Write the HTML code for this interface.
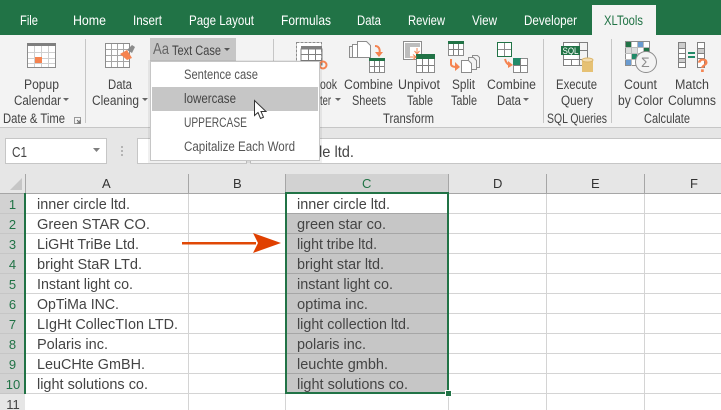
<!DOCTYPE html>
<html><head><meta charset="utf-8"><style>
html,body{margin:0;padding:0;background:#fff}
body{width:721px;height:410px;overflow:hidden}
svg{display:block}
text{font-family:"Liberation Sans",sans-serif;font-size:13.5px;fill:#444}
.t text{fill:#fff;font-size:14px}
.c text{font-size:14.67px;fill:#444}
.m text{fill:#555;font-size:13.5px}
.l{stroke:#d4d4d4;stroke-width:1;shape-rendering:crispEdges}
.g{stroke:#a6a6a6;stroke-width:1;shape-rendering:crispEdges}
.s{stroke:#c6c6c6;stroke-width:1;shape-rendering:crispEdges}
.r text{font-size:13px;fill:#217346;text-anchor:middle}
.i{fill:none;stroke:#7f7f7f;stroke-width:1;shape-rendering:crispEdges}
</style></head><body>
<svg width="721" height="410" viewBox="0 0 721 410" xmlns="http://www.w3.org/2000/svg">
<rect width="721" height="410" fill="#fff"/>
<!-- title tabs -->
<rect width="721" height="35" fill="#217346"/>
<rect x="592" y="5" width="64" height="30" fill="#f3f3f3"/>
<g class="t">
<text x="20" y="25" textLength="18" lengthAdjust="spacingAndGlyphs">File</text>
<text x="73" y="25" textLength="33" lengthAdjust="spacingAndGlyphs">Home</text>
<text x="133" y="25" textLength="29" lengthAdjust="spacingAndGlyphs">Insert</text>
<text x="189" y="25" textLength="65" lengthAdjust="spacingAndGlyphs">Page Layout</text>
<text x="281" y="25" textLength="50" lengthAdjust="spacingAndGlyphs">Formulas</text>
<text x="357" y="25" textLength="24" lengthAdjust="spacingAndGlyphs">Data</text>
<text x="408" y="25" textLength="37" lengthAdjust="spacingAndGlyphs">Review</text>
<text x="472" y="25" textLength="25" lengthAdjust="spacingAndGlyphs">View</text>
<text x="524" y="25" textLength="53" lengthAdjust="spacingAndGlyphs">Developer</text>
<text x="604" y="25" textLength="39" lengthAdjust="spacingAndGlyphs" style="fill:#217346">XLTools</text>
</g>
<!-- ribbon -->
<rect y="35" width="721" height="92" fill="#f3f3f3"/>
<rect y="127" width="721" height="47" fill="#e6e6e6"/>
<line x1="0" x2="721" y1="127.5" y2="127.5" class="s"/>
<g class="s"><line x1="85.5" x2="85.5" y1="39" y2="123"/><line x1="273.5" x2="273.5" y1="39" y2="123"/><line x1="543.5" x2="543.5" y1="39" y2="123"/><line x1="611.5" x2="611.5" y1="39" y2="123"/></g>
<text x="24" y="89" textLength="35" lengthAdjust="spacingAndGlyphs">Popup</text>
<text x="14" y="105" textLength="47" lengthAdjust="spacingAndGlyphs">Calendar</text>
<text x="108" y="89" textLength="24" lengthAdjust="spacingAndGlyphs">Data</text>
<text x="92" y="105" textLength="47" lengthAdjust="spacingAndGlyphs">Cleaning</text>
<text x="3" y="123" textLength="62" lengthAdjust="spacingAndGlyphs">Date &amp; Time</text>
<text x="320" y="89" textLength="17" lengthAdjust="spacingAndGlyphs">ook</text>
<text x="320" y="105" textLength="11" lengthAdjust="spacingAndGlyphs">ter</text>
<text x="344" y="89" textLength="49" lengthAdjust="spacingAndGlyphs">Combine</text>
<text x="352" y="105" textLength="34" lengthAdjust="spacingAndGlyphs">Sheets</text>
<text x="398" y="89" textLength="42" lengthAdjust="spacingAndGlyphs">Unpivot</text>
<text x="407" y="105" textLength="26" lengthAdjust="spacingAndGlyphs">Table</text>
<text x="452" y="89" textLength="23" lengthAdjust="spacingAndGlyphs">Split</text>
<text x="451" y="105" textLength="26" lengthAdjust="spacingAndGlyphs">Table</text>
<text x="487" y="89" textLength="49" lengthAdjust="spacingAndGlyphs">Combine</text>
<text x="497" y="105" textLength="24" lengthAdjust="spacingAndGlyphs">Data</text>
<text x="383" y="123" textLength="51" lengthAdjust="spacingAndGlyphs">Transform</text>
<text x="556" y="89" textLength="41" lengthAdjust="spacingAndGlyphs">Execute</text>
<text x="561" y="105" textLength="32" lengthAdjust="spacingAndGlyphs">Query</text>
<text x="547" y="123" textLength="60" lengthAdjust="spacingAndGlyphs">SQL Queries</text>
<text x="624" y="89" textLength="33" lengthAdjust="spacingAndGlyphs">Count</text>
<text x="618" y="105" textLength="45" lengthAdjust="spacingAndGlyphs">by Color</text>
<text x="675" y="89" textLength="34" lengthAdjust="spacingAndGlyphs">Match</text>
<text x="668" y="105" textLength="48" lengthAdjust="spacingAndGlyphs">Columns</text>
<text x="644" y="123" textLength="46" lengthAdjust="spacingAndGlyphs">Calculate</text>
<g fill="#666"><path d="M63 98h6l-3 3zM142 98h6l-3 3zM335 98h6l-3 3zM523 98h6l-3 3z"/></g>
<path d="M74.500 117.500h6v6h-6z" fill="none" stroke="#999"/><path d="M77 120l3 3M80 120v3h-3" fill="none" stroke="#666"/>

<!-- popup calendar icon -->
<rect x="27.500" y="43.500" width="28" height="24" fill="#fff" stroke="#8c8c8c"/>
<rect x="27" y="43" width="29" height="3" fill="#7f7f7f"/>
<path d="M28 52.500h27M28 58.500h27M28 63.500h27M34.500 46v21M41.500 46v21M48.500 46v21" style="stroke:#cfcfcf;fill:none;shape-rendering:crispEdges"/>
<rect x="35" y="57" width="7" height="6" fill="#f58350"/>
<!-- data cleaning icon -->
<rect x="105.500" y="43.500" width="24" height="24" fill="#fff" stroke="#8c8c8c"/>
<path d="M106 49.500h23M106 55.500h23M106 61.500h23M111.500 44v23M117.500 44v23M123.500 44v23" style="stroke:#a6a6a6;fill:none;shape-rendering:crispEdges"/>
<path d="M120 54l7-4 5 8-5 2z" fill="#f58350"/>
<path d="M127 50l5-5 3 2-3 6z" fill="#8c8c8c"/>

<!-- workbook icon -->
<rect x="296.500" y="42.500" width="25" height="22" fill="#fff" stroke="#8c8c8c" stroke-dasharray="3 1"/>
<rect x="301" y="46" width="21" height="3" fill="#7f7f7f"/>
<path d="M301 49h21v16h-21zM301 54.500h21M301 60.500h21M308.500 49v16M315.500 49v16" class="i"/>
<circle cx="323" cy="65" r="3.500" fill="none" stroke="#f58350" stroke-width="2"/>

<!-- combine sheets -->
<path d="M354.500 46.500h-5v11h5z" fill="none" stroke="#8c8c8c"/><path d="M357.500 44.500h-5v13h5z" fill="#fff" stroke="#8c8c8c"/>
<path d="M357.500 41.500h9l4 4v12h-13z" fill="#fff" stroke="#8c8c8c"/>
<path d="M375 46c5 0 6 6 3 9" fill="none" stroke="#f58350" stroke-width="2"/><path d="M375 52l4 5 4-5z" fill="#f58350"/>
<rect x="369.500" y="58.500" width="15" height="14" fill="#fff" stroke="#8c8c8c"/><rect x="369" y="58" width="16" height="3" fill="#217346"/>
<path d="M370 66.500h14M374.500 61v11M379.500 61v11" class="i"/>

<!-- unpivot -->
<rect x="403.500" y="41.500" width="18" height="18" fill="#fff" stroke="#8c8c8c"/><rect x="405" y="43" width="15" height="4" fill="#bdbdbd"/><rect x="405" y="47" width="5" height="11" fill="#bdbdbd"/>
<path d="M417 48v5M414.500 51l2.500 3 2.500-3" stroke="#f58350" fill="none"/>
<rect x="416.500" y="54.500" width="18" height="18" fill="#fff" stroke="#8c8c8c"/><rect x="416" y="54" width="19" height="5" fill="#217346"/>
<path d="M417 65.500h17M422.500 59v13M428.500 59v13" class="i"/>
<path d="M410 57h6M413 54.500l3 2.500-3 2.500" stroke="#f58350" fill="none"/>

<!-- split -->
<rect x="448.500" y="41.500" width="15" height="14" fill="#fff" stroke="#8c8c8c"/><rect x="448" y="41" width="16" height="3" fill="#217346"/>
<path d="M449 49.500h14M453.500 44v11M458.500 44v11" class="i"/>
<path d="M451 59v5c0 2 2 3 6 3" fill="none" stroke="#f58350" stroke-width="2"/><path d="M455 62l5 5-5 4z" fill="#f58350"/>
<path d="M472.500 55.500h5l2 2v10h-7z" fill="#f3f3f3" stroke="#8c8c8c"/><path d="M468.500 57.500h5l3 3v9h-8z" fill="#f3f3f3" stroke="#8c8c8c"/><path d="M461.500 60.500h7l3 3v9h-10z" fill="#fff" stroke="#8c8c8c"/>

<!-- combine data -->
<rect x="497.500" y="42.500" width="14" height="14" fill="#fff" stroke="#217346"/><path d="M498 49.500h13M504.500 43v13" stroke="#8c8c8c" fill="none" shape-rendering="crispEdges"/>
<path d="M505 59c1 4 3 6 6 6" fill="none" stroke="#f58350" stroke-width="2"/><path d="M508 61l5 4-5 3z" fill="#f58350"/>
<rect x="513.500" y="58.500" width="14" height="14" fill="#fff" stroke="#8c8c8c"/><rect x="513" y="58" width="8" height="7" fill="#218a68"/><path d="M514 65.500h13M520.500 59v13" class="i"/>

<!-- SQL -->
<rect x="563.500" y="42.500" width="14" height="24" fill="#fff"/>
<path d="M563.500 42.500h24v23h-24zM563.500 59.500h24M571.500 59v7M579.500 42v24M579.500 50.500h8" class="i"/>
<rect x="561" y="46" width="19" height="9" fill="#217346"/>
<text x="562.500" y="54" textLength="16" lengthAdjust="spacingAndGlyphs" style="font-size:9.500px;fill:#fff">SQL</text>
<rect x="582" y="60" width="11" height="12" fill="#e6c174"/>
<ellipse cx="587.500" cy="60" rx="5.500" ry="2" fill="#f3dcae" stroke="#dcb568"/>

<!-- count by color -->
<rect x="625.500" y="41.500" width="24" height="24" fill="#fff" stroke="#8c8c8c"/>
<rect x="626" y="42" width="5" height="5" fill="#217346"/><rect x="637" y="42" width="6" height="5" fill="#6a9bd0"/>
<rect x="626" y="48" width="5" height="5" fill="#ddd"/><rect x="632" y="48" width="5" height="5" fill="#ddd"/><rect x="644" y="48" width="5" height="4" fill="#217346"/>
<rect x="632" y="54" width="5" height="5" fill="#218a68"/><rect x="626" y="60" width="5" height="5" fill="#6a9bd0"/>
<path d="M625 47.500h24M625 53.500h24M625 59.500h24M631.500 42v24M637.500 42v24M643.500 42v24" style="stroke:#bbb;fill:none;shape-rendering:crispEdges"/>
<circle cx="646" cy="62" r="10.500" fill="#f3f3f3" stroke="#8c8c8c"/>
<text x="641" y="67" style="font-size:14px;fill:#8c8c8c">Σ</text>

<!-- match -->
<rect x="678.500" y="42.500" width="7" height="25" fill="#fff" stroke="#7f7f7f"/>
<rect x="679" y="43" width="6" height="5" fill="#ccc"/><rect x="679" y="58" width="6" height="5" fill="#ccc"/>
<path d="M679 48.500h6M679 53.500h6M679 58.500h6M679 62.500h6" class="i"/>
<rect x="697.500" y="42.500" width="7" height="25" fill="#fff" stroke="#7f7f7f"/>
<rect x="698" y="48" width="6" height="5" fill="#ccc"/>
<path d="M698 48.500h6M698 53.500h6M698 58.500h6" class="i"/>
<rect x="688" y="52" width="7" height="2" fill="#218a68"/><rect x="688" y="56" width="7" height="2" fill="#218a68"/>
<text x="697" y="72" style="font-size:19px;font-weight:bold;fill:#f58350">?</text>

<!-- formula bar -->
<rect x="5.500" y="138.500" width="101" height="25" fill="#fff" stroke="#c6c6c6"/>
<text x="12" y="157" style="font-size:15px" textLength="15" lengthAdjust="spacingAndGlyphs">C1</text>
<path d="M93 148h7l-3.500 4z" fill="#7f7f7f"/>
<g fill="#b4b4b4"><rect x="121" y="146" width="2" height="2"/><rect x="121" y="150" width="2" height="2"/><rect x="121" y="154" width="2" height="2"/></g>
<rect x="137.500" y="138.500" width="109" height="25" fill="#fff" stroke="#c6c6c6"/>
<rect x="250.500" y="138.500" width="472" height="25" fill="#fff" stroke="#c6c6c6"/>
<text x="319" y="157" style="font-size:16px" textLength="35" lengthAdjust="spacingAndGlyphs">le ltd.</text>

<!-- col headers -->
<rect y="174" width="721" height="19" fill="#e6e6e6"/>
<path d="M22 178v12h-12z" fill="#c6c6c6"/>
<rect x="285" y="174" width="163" height="19" fill="#d2d2d2"/>
<line x1="0" x2="721" y1="193.500" y2="193.500" style="stroke:#a6a6a6" shape-rendering="crispEdges"/>
<g class="g"><line x1="25.500" x2="25.500" y1="174" y2="193"/><line x1="188.500" x2="188.500" y1="174" y2="193"/><line x1="285.500" x2="285.500" y1="174" y2="193"/><line x1="448.500" x2="448.500" y1="174" y2="193"/><line x1="546.500" x2="546.500" y1="174" y2="193"/><line x1="644.500" x2="644.500" y1="174" y2="193"/></g>
<text x="102" y="188" style="font-size:13px;fill:#333">A</text>
<text x="233" y="188" style="font-size:13px;fill:#333">B</text>
<text x="362" y="188" style="font-size:13px;fill:#217346">C</text>
<text x="493" y="188" style="font-size:13px;fill:#333">D</text>
<text x="591" y="188" style="font-size:13px;fill:#333">E</text>
<text x="690" y="188" style="font-size:13px;fill:#333">F</text>

<!-- row headers -->
<rect y="194" width="25" height="200" fill="#d2d2d2"/>
<rect y="394" width="25" height="16" fill="#e6e6e6"/>
<g class="s"><line x1="0" x2="25" y1="213.500" y2="213.500"/><line x1="0" x2="25" y1="233.500" y2="233.500"/><line x1="0" x2="25" y1="253.500" y2="253.500"/><line x1="0" x2="25" y1="273.500" y2="273.500"/><line x1="0" x2="25" y1="293.500" y2="293.500"/><line x1="0" x2="25" y1="313.500" y2="313.500"/><line x1="0" x2="25" y1="333.500" y2="333.500"/><line x1="0" x2="25" y1="353.500" y2="353.500"/><line x1="0" x2="25" y1="373.500" y2="373.500"/><line x1="0" x2="25" y1="393.500" y2="393.500"/></g>
<g class="r">
<text x="12.500" y="209">1</text><text x="12.500" y="229">2</text><text x="12.500" y="249">3</text><text x="12.500" y="269">4</text><text x="12.500" y="289">5</text><text x="12.500" y="309">6</text><text x="12.500" y="329">7</text><text x="12.500" y="349">8</text><text x="12.500" y="369">9</text><text x="13" y="389">10</text>
<text x="13" y="409" style="fill:#444">11</text>
</g>
<rect x="24" y="193" width="2" height="201" fill="#217346"/>

<!-- grid -->
<g class="l">
<line x1="26" x2="721" y1="213.500" y2="213.500"/><line x1="26" x2="721" y1="233.500" y2="233.500"/><line x1="26" x2="721" y1="253.500" y2="253.500"/><line x1="26" x2="721" y1="273.500" y2="273.500"/><line x1="26" x2="721" y1="293.500" y2="293.500"/><line x1="26" x2="721" y1="313.500" y2="313.500"/><line x1="26" x2="721" y1="333.500" y2="333.500"/><line x1="26" x2="721" y1="353.500" y2="353.500"/><line x1="26" x2="721" y1="373.500" y2="373.500"/><line x1="26" x2="721" y1="393.500" y2="393.500"/>
<line x1="188.500" x2="188.500" y1="194" y2="410"/><line x1="285.500" x2="285.500" y1="194" y2="410"/><line x1="448.500" x2="448.500" y1="194" y2="410"/><line x1="546.500" x2="546.500" y1="194" y2="410"/><line x1="644.500" x2="644.500" y1="194" y2="410"/>
</g>

<!-- selection -->
<rect x="287" y="214" width="160" height="178" fill="#c6c6c6"/>
<g class="g"><line x1="287" x2="447" y1="213.500" y2="213.500"/><line x1="287" x2="447" y1="233.500" y2="233.500"/><line x1="287" x2="447" y1="253.500" y2="253.500"/><line x1="287" x2="447" y1="273.500" y2="273.500"/><line x1="287" x2="447" y1="293.500" y2="293.500"/><line x1="287" x2="447" y1="313.500" y2="313.500"/><line x1="287" x2="447" y1="333.500" y2="333.500"/><line x1="287" x2="447" y1="353.500" y2="353.500"/><line x1="287" x2="447" y1="373.500" y2="373.500"/></g>
<rect x="286" y="193" width="162" height="200" fill="none" stroke="#217346" stroke-width="2" shape-rendering="crispEdges"/>
<rect x="445.500" y="390.500" width="6" height="6" fill="#217346" stroke="#fff" stroke-width="1" shape-rendering="crispEdges"/>

<!-- cell text -->
<g class="c">
<text x="37" y="209" textLength="93" lengthAdjust="spacingAndGlyphs">inner circle ltd.</text>
<text x="37" y="229" textLength="113" lengthAdjust="spacingAndGlyphs">Green STAR CO.</text>
<text x="37" y="249" textLength="102" lengthAdjust="spacingAndGlyphs">LiGHt TriBe Ltd.</text>
<text x="37" y="269" textLength="105" lengthAdjust="spacingAndGlyphs">bright StaR LTd.</text>
<text x="37" y="289" textLength="96" lengthAdjust="spacingAndGlyphs">Instant light co.</text>
<text x="37" y="309" textLength="82" lengthAdjust="spacingAndGlyphs">OpTiMa INC.</text>
<text x="37" y="329" textLength="141" lengthAdjust="spacingAndGlyphs">LIgHt CollecTIon LTD.</text>
<text x="37" y="349" textLength="71" lengthAdjust="spacingAndGlyphs">Polaris inc.</text>
<text x="37" y="369" textLength="108" lengthAdjust="spacingAndGlyphs">LeuCHte GmBH.</text>
<text x="37" y="389" textLength="111" lengthAdjust="spacingAndGlyphs">light solutions co.</text>
<text x="297" y="209" textLength="93" lengthAdjust="spacingAndGlyphs">inner circle ltd.</text>
<text x="297" y="229" textLength="89" lengthAdjust="spacingAndGlyphs">green star co.</text>
<text x="297" y="249" textLength="80" lengthAdjust="spacingAndGlyphs">light tribe ltd.</text>
<text x="297" y="269" textLength="87" lengthAdjust="spacingAndGlyphs">bright star ltd.</text>
<text x="297" y="289" textLength="96" lengthAdjust="spacingAndGlyphs">instant light co.</text>
<text x="297" y="309" textLength="71" lengthAdjust="spacingAndGlyphs">optima inc.</text>
<text x="297" y="329" textLength="113" lengthAdjust="spacingAndGlyphs">light collection ltd.</text>
<text x="297" y="349" textLength="69" lengthAdjust="spacingAndGlyphs">polaris inc.</text>
<text x="297" y="369" textLength="91" lengthAdjust="spacingAndGlyphs">leuchte gmbh.</text>
<text x="297" y="389" textLength="111" lengthAdjust="spacingAndGlyphs">light solutions co.</text>
</g>

<!-- arrow -->
<rect x="182" y="242" width="74" height="2.500" fill="#e04806"/>
<path d="M253 233l28 10-28 10 5-10z" fill="#e04000"/>

<!-- Text Case button and menu -->
<rect x="150" y="38" width="86" height="24" fill="#c6c6c6"/>
<text x="153" y="54" style="font-size:16px;fill:#666" textLength="16" lengthAdjust="spacingAndGlyphs">Aa</text>
<text x="172" y="55" textLength="49" lengthAdjust="spacingAndGlyphs">Text Case</text>
<path d="M224 48h6l-3 3z" fill="#555"/>
<rect x="148" y="60" width="174" height="103" fill="#000" opacity=".06"/>
<rect x="150.500" y="61.500" width="169" height="99" fill="#fff" stroke="#c6c6c6"/>
<rect x="152" y="87" width="166" height="24" fill="#c6c6c6"/>
<g class="m">
<text x="184" y="79" textLength="74" lengthAdjust="spacingAndGlyphs">Sentence case</text>
<text x="184" y="103" textLength="52" lengthAdjust="spacingAndGlyphs" style="fill:#444">lowercase</text>
<text x="184" y="127" textLength="63" lengthAdjust="spacingAndGlyphs">UPPERCASE</text>
<text x="184" y="151" textLength="111" lengthAdjust="spacingAndGlyphs">Capitalize Each Word</text>
</g>
<!-- cursor -->
<path d="M254.500 100.500v15l3.500-3 2.500 6 3-1.300-2.500-5.700h5z" fill="#fff" stroke="#333" stroke-width="1"/>
</svg>
</body></html>
